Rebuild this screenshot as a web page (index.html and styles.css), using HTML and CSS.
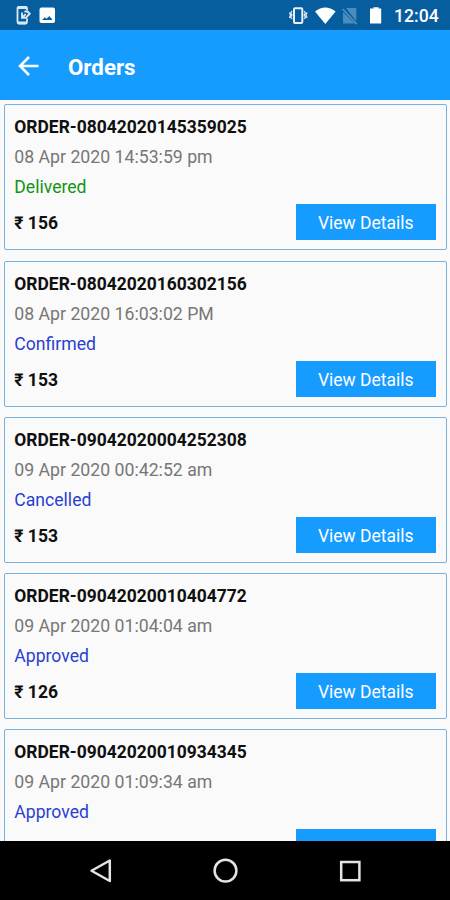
FILE: index.html
```
<!DOCTYPE html>
<html lang="en">
<head>
<meta charset="utf-8">
<title>Orders</title>
<link rel="stylesheet" href="styles.css">
</head>
<body>
<div class="screen">
  <div class="status">
    <svg class="status-icons" width="60" height="30" viewBox="0 0 60 30">
      <rect x="17.500" y="6.800" width="9.500" height="16.800" rx="1.500" fill="none" stroke="#d9e8f5" stroke-width="1.800"/>
      <path d="M18 7.500h8.500M18 22.800h8.500" stroke="#d9e8f5" stroke-width="2.800"/>
      <path d="M27 10.500v8" stroke="#075e9f" stroke-width="3"/>
      <path d="M22 12.500v5.300h5.200M22.500 17.300l3.200-3.200M24.500 11.500h3l2.200 2.300-3.200 3.200" fill="none" stroke="#d9e8f5" stroke-width="1.900"/>
      <rect x="39.500" y="7.500" width="15.500" height="15.500" rx="2" fill="#fff"/>
      <path d="M42 20l2.800-2.800 1.800 1.500 2.800-2.800 3.200 4.100z" fill="#075e9f"/>
    </svg>
    <svg class="status-icons" width="105" height="30" viewBox="285 0 105 30">
      <rect x="294" y="8.300" width="8.300" height="14.600" rx="1" fill="none" stroke="#e5f0f9" stroke-width="2"/>
      <path d="M292 11l-1.200 2 1.200 2-1.200 2 1.200 2M289.500 12.500l1 2.500-1 3M304.200 11l1.200 2-1.200 2 1.200 2-1.200 2M307 12.500l-1 2.500 1 3" fill="none" stroke="#dbe9f5" stroke-width="1.300"/>
      <path d="M315 11.500q10.300-8 20.600 0L325.300 24z" fill="#fff"/>
      <path d="M346 8h10.300v13.300zM343 12v11.500h12z" fill="#4c8cbd"/>
      <path d="M342.700 9l14.300 15.200" stroke="#5c97c4" stroke-width="1.300"/>
      <path d="M373.500 7.300h5v1.200h2.700v15h-11.200v-15h3.500z" fill="#fff"/>
    </svg>
    <span class="time">12:04</span>
  </div>
  <header class="bar">
    <svg class="back" width="22" height="22" viewBox="0 0 22 22"><path d="M21.500 11H3M12 2L3 11l9 9" fill="none" stroke="#fff" stroke-width="2.500"/></svg>
    <h1 class="title">Orders</h1>
  </header>
  <main class="list">
    <section class="card">
      <div class="id">ORDER-08042020145359025</div>
      <div class="date">08 Apr 2020 14:53:59 pm</div>
      <div class="state delivered">Delivered</div>
      <div class="foot"><span class="price">₹ 156</span><button class="btn">View Details</button></div>
    </section>
    <section class="card">
      <div class="id">ORDER-08042020160302156</div>
      <div class="date">08 Apr 2020 16:03:02 PM</div>
      <div class="state">Confirmed</div>
      <div class="foot"><span class="price">₹ 153</span><button class="btn">View Details</button></div>
    </section>
    <section class="card">
      <div class="id">ORDER-09042020004252308</div>
      <div class="date">09 Apr 2020 00:42:52 am</div>
      <div class="state">Cancelled</div>
      <div class="foot"><span class="price">₹ 153</span><button class="btn">View Details</button></div>
    </section>
    <section class="card">
      <div class="id">ORDER-09042020010404772</div>
      <div class="date">09 Apr 2020 01:04:04 am</div>
      <div class="state">Approved</div>
      <div class="foot"><span class="price">₹ 126</span><button class="btn">View Details</button></div>
    </section>
    <section class="card">
      <div class="id">ORDER-09042020010934345</div>
      <div class="date">09 Apr 2020 01:09:34 am</div>
      <div class="state">Approved</div>
      <div class="foot"><span class="price"></span><button class="btn" aria-label="View Details"></button></div>
    </section>
  </main>
  <nav class="nav">
    <svg width="450" height="59" viewBox="0 841 450 59" fill="none" stroke="#e4e4e4" stroke-width="2.500">
      <path d="M109.800 860.500v20.500l-18.300-10.250z" stroke-linejoin="round"/>
      <circle cx="225.500" cy="870.700" r="10.900"/>
      <rect x="341.200" y="862" width="18.200" height="18.200"/>
    </svg>
  </nav>
</div>
</body>
</html>
```
FILE: styles.css
```
* { box-sizing: border-box; }
body { margin: 0; font-family: Roboto, "Noto Sans", sans-serif; }
.screen { width: 450px; height: 900px; display: flex; flex-direction: column; overflow: hidden; background: #fafafa; }
.status { height: 30px; flex: none; background: #075e9f; display: flex; align-items: flex-start; }
.status-icons { display: block; flex: none; }
.status-icons + .status-icons { margin-left: 225px; }
.time { margin-left: 4px; font-size: 17.6px; line-height: 32px; font-weight: 500; color: #fff; }
.bar { height: 70px; flex: none; background: #169bff; display: flex; align-items: center; padding-left: 17px; }
.back { flex: none; margin-top: 1px; }
.title { margin: 3px 0 0 29px; font-size: 22.3px; line-height: 28px; font-weight: 700; color: #fff; }
.list { flex: 1; min-height: 0; overflow: hidden; padding: 4.25px 3px 0 4px; display: flex; flex-direction: column; gap: 10.25px; }
.card { flex: none; height: 146px; border: 1.5px solid #78b2de; border-radius: 2px; padding: 7px 10px 0 9.3px; }
.id { height: 30px; line-height: 30px; font-size: 17.45px; font-weight: 700; color: #101010; white-space: nowrap; }
.date { height: 30px; line-height: 30px; font-size: 17.7px; color: #777; }
.state { height: 30px; line-height: 30px; font-size: 17.6px; color: #2a3fd0; }
.state.delivered { color: #159215; }
.foot { display: flex; align-items: center; justify-content: space-between; margin-top: 2px; }
.price { padding-top: 2px; font-size: 17.5px; font-weight: 700; color: #101010; }
.btn { width: 140.5px; height: 36px; border: 0; padding: 2px 0 0; background: #169bff; color: #fff; font: 400 17.5px Roboto, sans-serif; }
.nav { height: 59px; flex: none; background: #000; }
.nav svg { display: block; }
```
